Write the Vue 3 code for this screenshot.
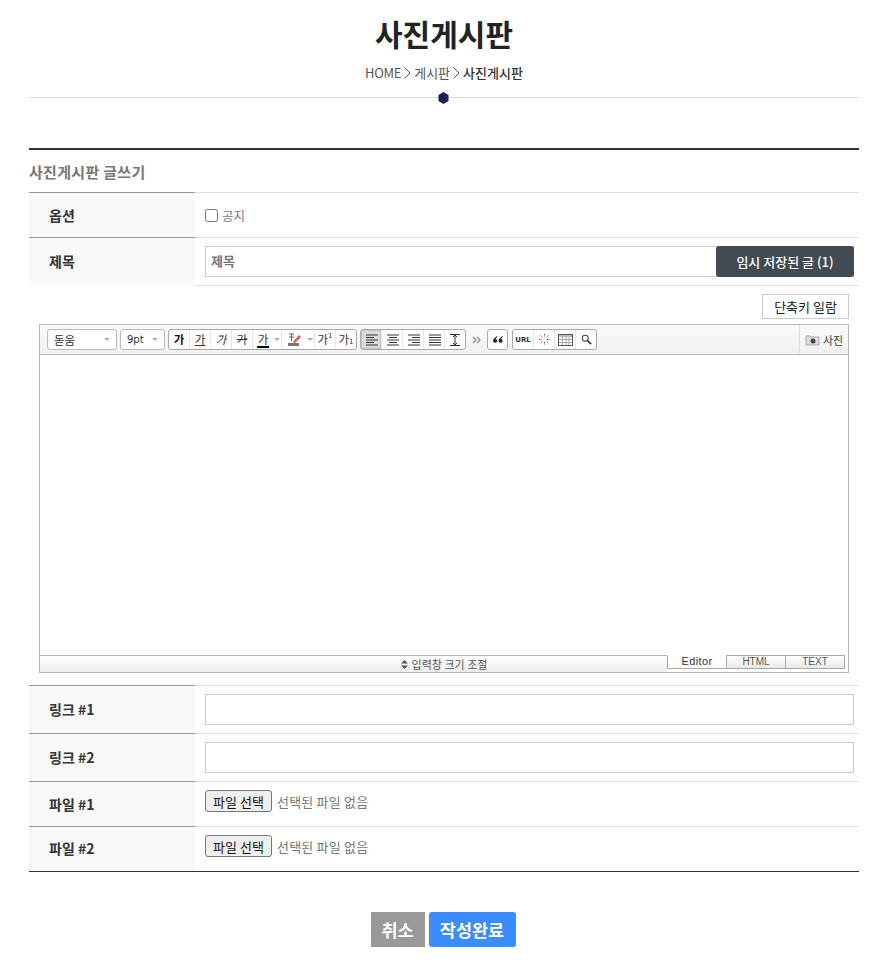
<script setup>
const styleBtns = [
  { t: '가', c: 'b' },
  { t: '가', c: 'u' },
  { t: '가', c: 'i' },
  { t: '가', c: 's' },
  { t: '가', c: 'fc' }
]
const aligns = [
  { id: 'left', on: true, lines: [[2, 12], [2, 8], [2, 12], [2, 8], [2, 12]] },
  { id: 'center', lines: [[2, 12], [4, 8], [2, 12], [4, 8], [2, 12]] },
  { id: 'right', lines: [[2, 12], [6, 8], [2, 12], [6, 8], [2, 12]] },
  { id: 'full', lines: [[2, 12], [2, 12], [2, 12], [2, 12], [2, 12]] }
]
const links = ['링크 #1', '링크 #2']
const files = ['파일 #1', '파일 #2']
</script>

<template>
  <div class="page">
    <header class="head">
      <h1>사진게시판</h1>
      <p class="crumb">
        <span class="home">HOME</span>
        <svg class="gt" width="7" height="12" viewBox="0 0 7 12"><path d="M.5.500 6 6 .5 11.500" stroke="#555" fill="none"/></svg>
        <span>게시판</span>
        <svg class="gt" width="7" height="12" viewBox="0 0 7 12"><path d="M.5.500 6 6 .5 11.500" stroke="#555" fill="none"/></svg>
        <b>사진게시판</b>
      </p>
      <div class="rule"><svg class="hex" width="11" height="12" viewBox="0 0 11 12"><path d="M5.500 0 10.500 3v6l-5 3-5-3V3z" fill="#1b1f5c"/></svg></div>
    </header>

    <section class="board">
      <h2>사진게시판 글쓰기</h2>

      <div class="row r-opt">
        <div class="th">옵션</div>
        <div class="td"><label class="notice"><span class="check"></span>공지</label></div>
      </div>
      <div class="row r-title">
        <div class="th">제목</div>
        <div class="td title-td">
          <div class="input title-input">제목</div>
          <button class="draft">임시 저장된 글 (1)</button>
        </div>
      </div>

      <div class="editor-row">
        <div class="short-wrap"><button class="shortcut">단축키 일람</button></div>
        <div class="editor">
          <div class="toolbar">
            <div class="sel s-font">돋움<i class="caret"></i></div>
            <div class="sel s-size">9pt<i class="caret"></i></div>
            <div class="grp">
              <span v-for="(b, i) in styleBtns" :key="i" class="tb" :class="b.c">{{ b.t }}</span>
              <span class="tb drop"><i class="caret"></i></span>
              <span class="tb hl">
                <svg width="15" height="15" viewBox="0 0 15 15"><rect x="1" y="11" width="11" height="3" fill="#777"/><path d="M2 2h5M2 5h5M4.500 2v7" stroke="#666" fill="none"/><path d="M6 10 12 3l2 2-6 6z" fill="#e2574c"/></svg>
              </span>
              <span class="tb drop"><i class="caret"></i></span>
              <span class="tb sup">가<small>1</small></span>
              <span class="tb sub">가<small>1</small></span>
            </div>
            <div class="grp g-align">
              <span v-for="a in aligns" :key="a.id" class="tb ic" :class="{ on: a.on }">
                <svg width="14" height="12" viewBox="0 0 14 12">
                  <path v-for="(l, i) in a.lines" :key="i" :d="`M${l[0]} ${1 + i * 2.5}h${l[1]}`" stroke="#333" fill="none"/>
                </svg>
              </span>
              <span class="tb ic">
                <svg width="14" height="14" viewBox="0 0 14 14"><path d="M2 1.500h10M2 12.500h10M7 2v10M5 4l2-2 2 2M5 10l2 2 2-2" stroke="#333" fill="none"/></svg>
              </span>
            </div>
            <span class="more">
              <svg width="9" height="8" viewBox="0 0 9 8"><path d="M1 1l3 3-3 3M5 1l3 3-3 3" stroke="#888" stroke-width="1.200" fill="none"/></svg>
            </span>
            <div class="grp g-one">
              <span class="tb quote">
                <svg width="10" height="7" viewBox="0 0 10 7"><path d="M4 0C2 1.500 0 3 0 5a2 2 0 1 0 4-.5Q4 3 2.500 3L4.500.500zM9.500 0C7.500 1.500 5.500 3 5.500 5a2 2 0 1 0 4-.5Q9.500 3 8 3L10 .500z" fill="#222"/></svg>
              </span>
            </div>
            <div class="grp g-ins">
              <span class="tb url">URL</span>
              <span class="tb ic">
                <svg width="13" height="13" viewBox="0 0 13 13"><path d="M6.500 1v3M6.500 9v3M1 6.500h3M9 6.500h3M2.500 2.500l2 2M8.500 8.500l2 2M10.500 2.500l-2 2M4.500 8.500l-2 2" stroke="#555" stroke-dasharray="1.500 1" fill="none"/></svg>
              </span>
              <span class="tb ic">
                <svg width="15" height="12" viewBox="0 0 15 12"><rect x=".5" y=".5" width="14" height="11" fill="#fff" stroke="#555"/><rect x="1" y="1" width="13" height="2" fill="#bbb"/><path d="M1 5.500h13M1 8.500h13M4.500 3v8M8 3v8M11 3v8" stroke="#aaa" fill="none"/></svg>
              </span>
              <span class="tb ic">
                <svg width="11" height="11" viewBox="0 0 13 13"><circle cx="5" cy="5" r="3.500" fill="none" stroke="#444" stroke-width="1.200"/><path d="M7.500 7.500 12 12" stroke="#444" stroke-width="2"/></svg>
              </span>
            </div>
            <div class="attach">
              <svg width="15" height="12" viewBox="0 0 15 12"><path d="M1 2h4l1 1h8v8H1z" fill="#ddd" stroke="#aaa"/><circle cx="8" cy="7" r="2.500" fill="#444"/></svg>
              사진
            </div>
          </div>
          <div class="canvas"></div>
          <div class="foot">
            <div class="resize">
              <svg class="arrows" width="7" height="9" viewBox="0 0 7 9"><path d="M3.500 0 7 3.500H0zM0 5.500h7L3.500 9z" fill="#555"/></svg>
              입력창 크기 조절
            </div>
            <div class="tabs">
              <span class="tab active">Editor</span>
              <span class="tab">HTML</span>
              <span class="tab">TEXT</span>
            </div>
          </div>
        </div>
      </div>

      <div v-for="l in links" :key="l" class="row r-link">
        <div class="th">{{ l }}</div>
        <div class="td"><div class="input"></div></div>
      </div>
      <div v-for="f in files" :key="f" class="row r-file">
        <div class="th">{{ f }}</div>
        <div class="td file-td"><button class="pick">파일 선택</button><span class="none">선택된 파일 없음</span></div>
      </div>
    </section>

    <div class="actions">
      <button class="cancel">취소</button>
      <button class="submit">작성완료</button>
    </div>
  </div>
</template>

<style>
html, body { margin: 0; background: #fff; }
</style>

<style scoped>
.page {
  width: 830px;
  margin: 0 auto;
  height: 965px;
  overflow: hidden;
  font-family: "Noto Sans CJK KR", "Noto Sans", sans-serif;
  color: #333;
}
.head { text-align: center; height: 148px; }
h1 {
  margin: 0;
  padding-top: 11px;
  font-size: 30px;
  line-height: 44px;
  font-weight: 700;
  color: #222;
  letter-spacing: 0;
}
.crumb {
  margin: 8px 0 0;
  display: flex;
  justify-content: center;
  align-items: center;
  gap: 3px;
  font-size: 13px;
  line-height: 20px;
  color: #555;
}
.home { letter-spacing: -0.3px; }
.crumb b { color: #333; font-weight: 500; }
.rule {
  position: relative;
  margin-top: 14px;
  border-top: 1px solid #ddd;
}
.hex { position: absolute; left: 409px; top: -6px; }

.board { border-top: 2px solid #333; border-bottom: 1px solid #333; }
h2 {
  margin: 0;
  height: 43px;
  border-bottom: 1px solid #ddd;
  box-sizing: border-box;
  font-size: 15px;
  line-height: 43px;
  font-weight: 700;
  color: #777;
  letter-spacing: 0.3px;
}
.row { display: flex; border-bottom: 1px solid #e2e2e2; box-sizing: border-box; }
.th {
  width: 166px;
  flex: none;
  box-sizing: border-box;
  margin: -1px 0 -1px;
  border-top: 1px solid #999;
  background: #f9f9f9;
  padding: 0 0 2px 20px;
  display: flex;
  align-items: center;
  font-size: 14px;
  font-weight: 700;
  color: #333;
}
.td { flex: 1; min-width: 0; padding: 0 5px 0 10px; display: flex; align-items: center; }
.r-opt { height: 45px; }
.r-title { height: 48px; }
.r-link { height: 48px; }
.r-file { height: 45px; }
.r-file:last-child { height: 44px; border-bottom: 0; }
.r-file:last-child .th { margin-bottom: 0; }
.notice { display: flex; align-items: center; font-size: 12.500px; color: #777; }
.check {
  width: 11px; height: 11px; margin-right: 4px;
  border: 1px solid #767676; border-radius: 2.500px; background: #fff;
}
.input {
  width: 100%;
  height: 31px;
  box-sizing: border-box;
  border: 1px solid #ccc;
  background: #fff;
}
.title-td { position: relative; }
.title-input {
  font-size: 13px;
  font-weight: 700;
  line-height: 27px;
  padding-left: 5px;
  color: #777;
}
.draft {
  position: absolute;
  right: 5px;
  top: 8px;
  width: 138px;
  height: 31px;
  padding: 0;
  border: 0;
  border-radius: 3px;
  background: #434a54;
  color: #fff;
  font: 500 13px "Noto Sans CJK KR", sans-serif;
}

.editor-row { height: 391px; border-bottom: 1px solid #e2e2e2; box-sizing: content-box; padding: 8px 10px 0; }
.short-wrap { display: flex; justify-content: flex-end; height: 29px; }
.shortcut {
  width: 87px;
  height: 25px;
  padding: 0;
  border: 1px solid #ccc;
  background: #fff;
  color: #222;
  font: 400 13px "Noto Sans CJK KR", sans-serif;
}
.editor {
  margin-top: 1px;
  height: 349px;
  box-sizing: border-box;
  border: 1px solid #b5b5b5;
  display: flex;
  flex-direction: column;
}
.toolbar {
  height: 30px;
  flex: none;
  box-sizing: border-box;
  border-bottom: 1px solid #b5b5b5;
  background: linear-gradient(#fafafa, #f1f1f1);
  display: flex;
  align-items: center;
  padding-left: 7px;
  font-size: 12px;
  color: #333;
}
.sel {
  height: 21px;
  box-sizing: border-box;
  border: 1px solid #bbb;
  border-radius: 3px;
  background: #fff;
  display: flex;
  align-items: center;
  justify-content: space-between;
  padding: 0 6px;
  margin-right: 3px;
  font-size: 11.500px;
}
.s-font { width: 70px; }
.s-size { width: 45px; font-family: "DejaVu Sans", sans-serif; font-size: 10px; }
.caret {
  display: block;
  width: 0; height: 0;
  border-left: 3px solid transparent;
  border-right: 3px solid transparent;
  border-top: 3px solid #aaa;
}
.grp {
  height: 21px;
  box-sizing: border-box;
  border: 1px solid #aaa;
  border-radius: 3px;
  background: #fff;
  display: flex;
  margin-right: 3px;
}
.tb {
  width: 21px;
  height: 19px;
  box-sizing: border-box;
  border-right: 1px solid #e6e6e6;
  display: flex;
  align-items: center;
  justify-content: center;
  position: relative;
  font-size: 11.500px;
  line-height: 1;
  color: #333;
}
.tb:last-child { border-right: 0; width: 20px; }
.tb.b { font-weight: 700; color: #111; }
.tb.u { text-decoration: underline; }
.tb.i { font-style: italic; }
.tb.s { text-decoration: line-through; }
.tb.fc { border-right: 0; width: 20px; }
.tb.fc::after {
  content: ""; position: absolute; left: 4px; right: 4px; bottom: 1px; height: 2px; background: #000;
}
.tb.drop { width: 9px; }
.tb.hl { width: 24px; border-right: 0; }
.tb.sup small, .tb.sub small { font-size: 7px; font-family: "DejaVu Sans", sans-serif; }
.tb.sup small { margin-bottom: 6px; }
.tb.sub small { margin-top: 6px; }
.g-align { margin-right: 0; }
.tb.on { background: #dcdcdc; box-shadow: inset 0 0 2px #888; }
.more { width: 21px; display: flex; justify-content: center; }
.g-one { width: 21px; }
.g-one .tb { width: 19px; }
.g-ins { margin-left: 1px; }
.tb.url { font: 700 7px "DejaVu Sans", sans-serif; }
.attach {
  margin-left: auto;
  height: 29px;
  width: 49px;
  box-sizing: border-box;
  border-left: 1px solid #ddd;
  display: flex;
  align-items: center;
  justify-content: center;
  gap: 3px;
  font-size: 11px;
  color: #444;
}
.canvas { flex: 1; background: #fff; }
.foot {
  height: 17px;
  flex: none;
  display: flex;
  background: #fff;
}
.resize {
  flex: 1;
  box-sizing: border-box;
  border-top: 1px solid #b5b5b5;
  background: linear-gradient(#fff, #eee);
  display: flex;
  align-items: center;
  justify-content: center;
  padding-left: 181px;
  font-size: 11px;
  color: #555;
}
.arrows { margin-right: 4px; }
.tabs { display: flex; width: 181px; padding-right: 3px; box-sizing: border-box; height: 14px; }
.tab {
  width: 60px;
  height: 14px;
  box-sizing: border-box;
  border: 1px solid #aaa;
  background: linear-gradient(#fff, #e9e9e9);
  font: 400 10px/12px "Liberation Sans", sans-serif;
  text-align: center;
  color: #555;
}
.tab + .tab { margin-left: -1px; }
.tab.active {
  background: #fff;
  border-top-color: #fff;
  color: #333;
  font-size: 11px;
  letter-spacing: 0.4px;
  line-height: 11px;
}

.file-td { gap: 5px; padding-bottom: 6px; }
.pick {
  width: 67px;
  height: 22px;
  padding: 0;
  border: 1px solid #767676;
  border-radius: 3px;
  background: #efefef;
  color: #111;
  font: 400 13px "Noto Sans CJK KR", sans-serif;
}
.none { font-size: 13px; color: #777; letter-spacing: 0.2px; }

.actions {
  display: flex;
  justify-content: center;
  gap: 4px;
  margin: 40px 2px 0 0;
}
.actions button {
  height: 35px;
  padding: 0;
  border: 0;
  color: #fff;
  font: 700 17.500px "Noto Sans CJK KR", sans-serif;
}
.cancel { width: 54px; background: #999; }
.submit { width: 87px; background: #3b8cff; border-radius: 3px; }
</style>
